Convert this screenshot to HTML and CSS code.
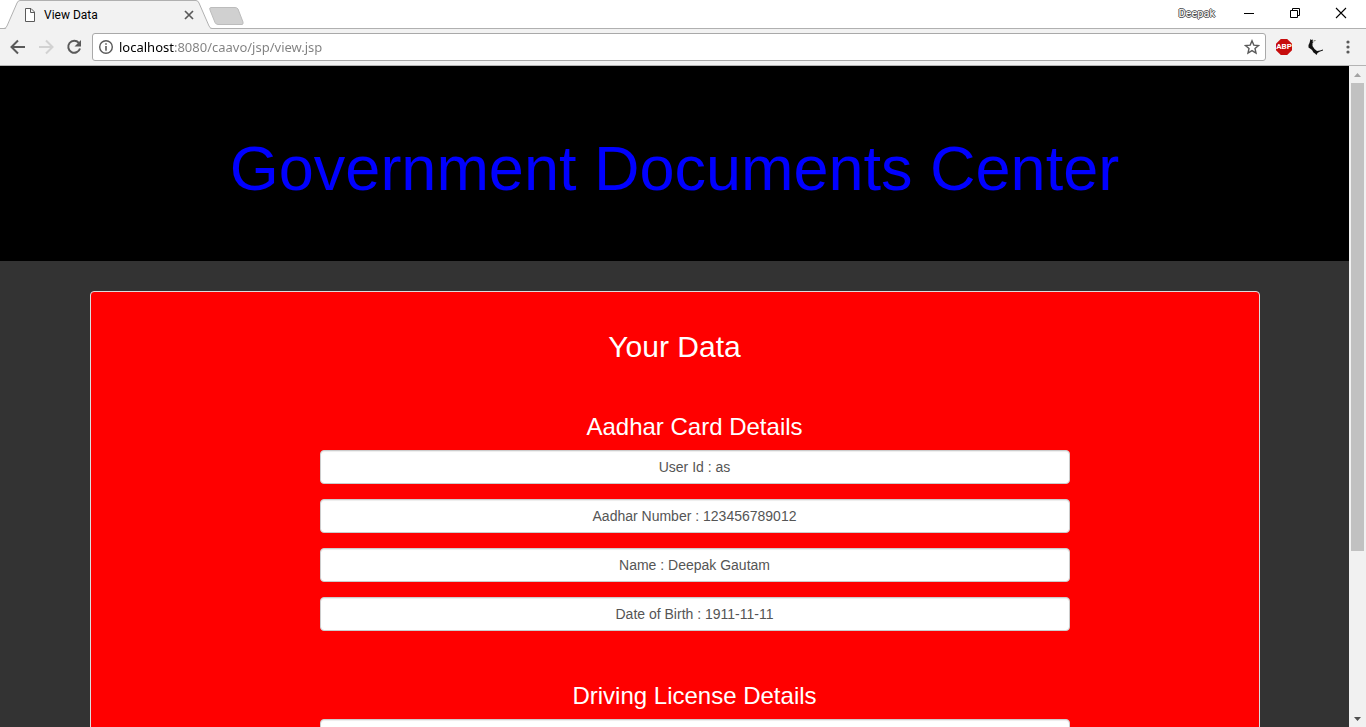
FILE: index.html
```html
<!DOCTYPE html>
<html lang="en">
<head>
<meta charset="utf-8">
<meta name="viewport" content="width=device-width, initial-scale=1">
<title>View Data</title>
<link rel="stylesheet" href="styles.css">
</head>
<body>
<header class="browser">
  <div class="tab-strip">
    <div class="tab">
      <svg class="tab-shape" width="212" height="29" viewBox="0 0 212 29" aria-hidden="true"><path d="M5 29C7 28 7 27 8 25L17 3Q18 .5 20 .5H196Q198 .5 199 3L208 25C209 27 209 28.500 212 28.500V29Z" fill="#f2f2f2"/><path d="M0 28.500H4Q6 28.500 7 26L17 3Q18 .5 20 .5H196Q198 .5 199 3L209 26Q210 28.500 212 28.500" fill="none" stroke="#b0b0b0"/></svg>
      <svg class="page-icon" width="12" height="14" viewBox="0 0 12 14" aria-hidden="true"><path d="M1.500 .5H7L10.500 4V13.500H1.500ZM6.500 .5V4.500H10.500" fill="#fff" stroke="#5a5a5a"/></svg>
      <span class="tab-title">View Data</span>
      <button class="icon-button" type="button" aria-label="Close tab"><svg width="10" height="10" viewBox="0 0 10 10"><path d="M1 1L9 9M9 1L1 9" stroke="#5a5a5a" stroke-width="1.700"/></svg></button>
    </div>
    <button class="icon-button new-tab" type="button" aria-label="New tab"><svg width="35" height="18" viewBox="0 0 35 18"><path d="M2 .5H26Q28 .5 29 2L34 15Q34.500 17.500 33 17.500H9Q7 17.500 6 15.500L1 3Q0 .5 2 .5Z" fill="#d0d0d0" stroke="#bcbcbc"/></svg></button>
    <div class="window-controls">
      <span class="profile">Deepak</span>
      <button class="icon-button" type="button" aria-label="Minimize"><svg width="12" height="12" viewBox="0 0 12 12"><path d="M1 6.500H11" stroke="#000"/></svg></button>
      <button class="icon-button" type="button" aria-label="Restore"><svg width="12" height="12" viewBox="0 0 12 12"><path d="M1.500 3.500H8.500V10.500H1.500ZM3.500 3V1.500H10.500V8.500H9" fill="none" stroke="#000"/></svg></button>
      <button class="icon-button" type="button" aria-label="Close window"><svg width="12" height="12" viewBox="0 0 12 12"><path d="M1 1L11 11M11 1L1 11" stroke="#000" stroke-width="1.100"/></svg></button>
    </div>
  </div>
  <div class="toolbar">
    <nav class="history" aria-label="History">
      <button class="icon-button" type="button" aria-label="Back"><svg width="16" height="16" viewBox="0 0 16 16"><path d="M15 8H2M8 1.500L1.500 8L8 14.500" fill="none" stroke="#5a5a5a" stroke-width="2"/></svg></button>
      <button class="icon-button" type="button" aria-label="Forward"><svg width="16" height="16" viewBox="0 0 16 16"><path d="M1 8H14M8 1.500L14.500 8L8 14.500" fill="none" stroke="#d2d2d2" stroke-width="2"/></svg></button>
      <button class="icon-button" type="button" aria-label="Reload"><svg width="16" height="16" viewBox="0 0 16 16"><path d="M12.800 3.800A6 6 0 1 0 14 9.500" fill="none" stroke="#5a5a5a" stroke-width="2"/><path d="M15 1V7.500H8.500Z" fill="#5a5a5a"/></svg></button>
    </nav>
    <div class="address-bar">
      <svg width="16" height="16" viewBox="0 0 16 16" aria-hidden="true"><circle cx="8" cy="8" r="6.300" fill="none" stroke="#5a5a5a" stroke-width="1.400"/><path d="M8 4.200V5.800M8 7V11.800" stroke="#5a5a5a" stroke-width="1.600"/></svg>
      <input class="address" type="text" aria-label="Address" value="localhost:8080/caavo/jsp/view.jsp" spellcheck="false">
      <button class="icon-button" type="button" aria-label="Bookmark this page"><svg width="16" height="16" viewBox="0 0 16 16"><path d="M8 1.800L9.800 6.100L14.500 6.500L11 9.500L12 14L8 11.600L4 14L5 9.500L1.500 6.500L6.200 6.100Z" fill="none" stroke="#5a5a5a" stroke-width="1.400"/></svg></button>
    </div>
    <div class="extensions">
      <button class="icon-button abp" type="button">ABP</button>
      <button class="icon-button" type="button" aria-label="Extension"><svg width="16" height="16" viewBox="0 0 16 16"><path d="M2.500 0L3.500 1L5 .5L4.500 2.500L5.500 3L4.500 4L4.500 7L6.500 10L9 12L12 11.500L15 10.500V11.500L11.500 12.800L9.500 14L8.500 16L7 14.500L5.500 13.500L4 11L2 9.500L.5 8.500V6L1.500 4Z" fill="#111"/><path d="M5.500 2L7.500 1.500" stroke="#776"/></svg></button>
      <button class="icon-button" type="button" aria-label="Menu"><svg width="16" height="16" viewBox="0 0 16 16"><g fill="#5a5a5a"><circle cx="8" cy="3" r="1.600"/><circle cx="8" cy="8" r="1.600"/><circle cx="8" cy="13" r="1.600"/></g></svg></button>
    </div>
  </div>
</header>
<div class="viewport">
  <main class="page">
    <div class="banner"><h1 class="banner-title">Government Documents Center</h1></div>
    <div class="panel">
      <h2 class="panel-title">Your Data</h2>
      <form class="records">
        <section class="record">
          <h3 class="record-title">Aadhar Card Details</h3>
          <input class="field" type="text" readonly aria-label="User Id" value="User Id : as">
          <input class="field" type="text" readonly aria-label="Aadhar Number" value="Aadhar Number : 123456789012">
          <input class="field" type="text" readonly aria-label="Name" value="Name : Deepak Gautam">
          <input class="field" type="text" readonly aria-label="Date of Birth" value="Date of Birth : 1911-11-11">
        </section>
        <section class="record">
          <h3 class="record-title">Driving License Details</h3>
          <input class="field" type="text" readonly aria-label="Driving license">
        </section>
      </form>
    </div>
  </main>
  <div class="scrollbar" aria-hidden="true">
    <svg class="scroll-arrow" width="17" height="17" viewBox="0 0 17 17"><path d="M5 11L8.500 7L12 11Z" fill="#a3a3a3"/></svg>
    <div class="scroll-track"><div class="scroll-thumb"></div></div>
    <svg class="scroll-arrow" width="17" height="17" viewBox="0 0 17 17"><path d="M5 7L8.500 11L12 7Z" fill="#505050"/></svg>
  </div>
</div>
</body>
</html>
```
FILE: styles.css
```css
* { box-sizing: border-box; }
body {
  margin: 0;
  height: 100vh;
  display: flex;
  flex-direction: column;
  overflow: hidden;
  background: #333;
  font-family: "Liberation Sans", Arial, sans-serif;
}
svg { display: block; flex: none; }
.icon-button {
  display: block;
  flex: none;
  margin: 0;
  padding: 0;
  border: 0;
  background: none;
}

/* Browser frame */
.browser { flex: none; font-family: Roboto, sans-serif; }
.tab-strip {
  display: flex;
  height: 29px;
  background: linear-gradient(#b0b0b0, #b0b0b0) bottom / 100% 1px no-repeat #fff;
}
.tab {
  position: relative;
  display: flex;
  align-items: center;
  width: 209px;
  padding: 1px 15px 0 24px;
  font-size: 12px;
}
.tab-shape { position: absolute; left: 0; top: 0; }
.page-icon, .tab-title, .tab .icon-button { position: relative; }
.tab-title { flex: 1; padding-left: 8px; }
.new-tab { align-self: flex-start; padding-top: 7px; }
.window-controls {
  display: flex;
  align-items: center;
  gap: 34px;
  margin-left: auto;
  padding: 0 19px 3px 0;
}
.profile {
  margin-right: -6px;
  font-size: 11px;
  color: #fff;
  text-shadow: 1px 0 #555, -1px 0 #555, 0 1px #555, 0 -1px #555;
}
.toolbar {
  display: flex;
  align-items: center;
  gap: 10px;
  height: 37px;
  padding: 0 10px;
  background: #f2f2f2;
  border-bottom: 1px solid #b4b4b4;
}
.history { display: flex; gap: 12px; }
.address-bar {
  flex: 1;
  display: flex;
  align-items: center;
  gap: 5px;
  height: 28px;
  padding: 0 5px;
  background: #fff;
  border: 1px solid #a9a9a9;
  border-radius: 3px;
}
.address {
  flex: 1;
  min-width: 0;
  padding: 0;
  border: 0;
  outline: 0;
  font: 13px "Noto Sans", sans-serif;
  /* Host name is black, the rest of the URL is grey */
  background: linear-gradient(to right, #000 55px, #808080 55px);
  -webkit-background-clip: text;
  background-clip: text;
  -webkit-text-fill-color: transparent;
}
.extensions { display: flex; align-items: center; gap: 16px; }
.abp {
  width: 16px;
  height: 16px;
  background: #c70d0d;
  clip-path: polygon(30% 0, 70% 0, 100% 30%, 100% 70%, 70% 100%, 30% 100%, 0 70%, 0 30%);
  color: #fff;
  font: bold 8px/16px Roboto, sans-serif;
  text-align: center;
}

/* Document */
.viewport { flex: 1; min-height: 0; display: flex; }
.page { flex: 1; min-width: 0; overflow: hidden; }
.banner { padding: 48px 16px; background: #000; text-align: center; }
.banner-title {
  margin: 20px 0 10px;
  color: #00f;
  font-size: 63px;
  font-weight: 400;
  line-height: 69px;
}
.panel {
  max-width: 1170px;
  margin: 30px auto;
  padding: 38px 15px;
  background: #f00;
  border: 1px solid #ddd;
  border-radius: 4px;
  color: #fff;
  text-align: center;
}
.panel-title { margin: 0 0 51px; font-size: 30px; font-weight: 400; line-height: 33px; }
.records { max-width: 790px; margin: 0 auto; padding-left: 40px; }
.record { display: flex; flex-direction: column; gap: 15px; margin-bottom: 52px; }
.record-title { margin: 0 0 -5px; font-size: 24px; font-weight: 400; line-height: 26px; }
.field {
  width: 100%;
  height: 34px;
  padding: 6px 12px;
  border: 1px solid #ccc;
  border-radius: 4px;
  background: #fff;
  box-shadow: inset 0 1px 1px rgba(0, 0, 0, .075);
  color: #555;
  font: 14px/20px "Liberation Sans", Arial, sans-serif;
  text-align: center;
}
.scrollbar {
  flex: none;
  display: flex;
  flex-direction: column;
  width: 17px;
  background: #f1f1f1;
}
.scroll-track { flex: 1; padding: 0 2px; }
.scroll-thumb { height: 74.7%; background: #c1c1c1; }
```
